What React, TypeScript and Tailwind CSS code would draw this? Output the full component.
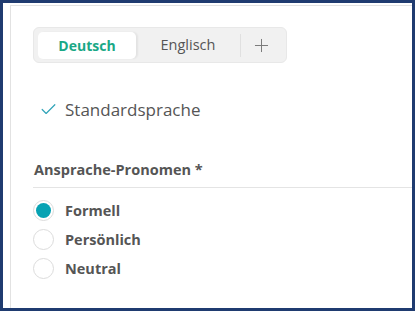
import { Check, Plus } from "lucide-react";

const font = { fontFamily: '"Open Sans", "Noto Sans", sans-serif' };

const OPTIONS = ["Formell", "Persönlich", "Neutral"];

export default function App() {
  return (
    <div
      className="flex h-[311px] w-[415px] flex-col border-[3px] border-[#1f3b70] bg-white"
      style={font}
    >
      <div className="ml-[7px] mt-[2px] flex-1 border-l border-t border-[#e2e2e2] pt-[21px]">
        {/* language tabs */}
        <div className="ml-[22px] flex h-[36px] w-[254px] items-center rounded-md border border-[#e8e8e8] bg-[#f1f1f1] px-[4px]">
          <div className="flex h-[27px] w-[98px] items-center justify-center rounded-[5px] bg-white text-[14px] font-bold text-[#1aa886] shadow-[2px_0_2px_rgba(0,0,0,0.06)]">
            Deutsch
          </div>
          <div className="flex h-[27px] w-[104px] items-center justify-center text-[14.5px] text-[#555]">
            Englisch
          </div>
          <div className="h-[23px] w-px bg-[#e0e0e0]" />
          <div className="flex flex-1 items-center justify-center text-[#777]">
            <Plus size={21} strokeWidth={1.1} />
          </div>
        </div>

        {/* default language */}
        <div className="ml-[28px] mt-[34px] flex items-center gap-[7px] text-[17px] text-[#555]">
          <Check size={19} strokeWidth={1.5} className="text-[#2fa3b8]" />
          <span>Standardsprache</span>
        </div>

        {/* pronouns */}
        <div className="ml-[23px] mt-[36px] text-[14.5px] font-bold text-[#555]">
          Ansprache-Pronomen <span>*</span>
        </div>
        <div className="ml-[22px] mt-[7px] border-t border-[#e4e4e4] pt-[8px]">
          {OPTIONS.map((o, i) => (
            <div key={o} className="flex h-[29px] items-center gap-[11px]">
              <span className="flex h-[21px] w-[21px] items-center justify-center rounded-full border border-[#dcdcdc] bg-white">
                {i === 0 && <span className="h-[15px] w-[15px] rounded-full bg-[#07a2b3]" />}
              </span>
              <span className="text-[14.5px] font-bold text-[#555]">{o}</span>
            </div>
          ))}
        </div>
      </div>
    </div>
  );
}
